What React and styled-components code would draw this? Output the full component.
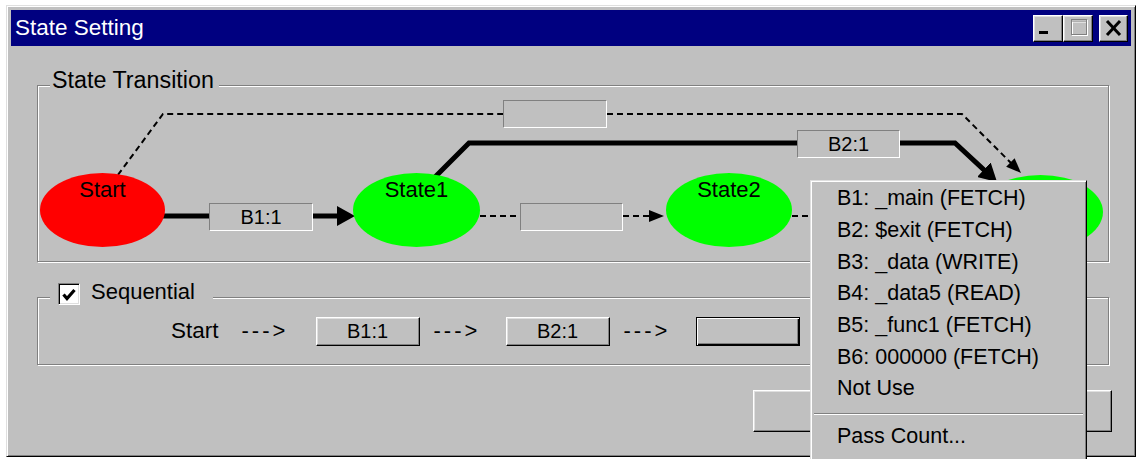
import React from 'react';
import styled, { createGlobalStyle } from 'styled-components';

const FONT = `"Liberation Sans", Arial, sans-serif`;

const GlobalStyle = createGlobalStyle`
  html, body { margin: 0; padding: 0; background: #fff; }
  body { font-family: ${FONT}; overflow: hidden; }
  * { box-sizing: border-box; }
`;

const Screen = styled.div`
  position: relative;
  width: 1138px;
  height: 459px;
  overflow: hidden;
  padding: 5px 0 0 6px;
`;

const Window = styled.div`
  width: 1130px;
  height: 452px;
  background: #c0c0c0;
  border: 1px solid;
  border-color: #dfdfdf #000 #000 #dfdfdf;
  box-shadow: inset 1px 1px 0 #fff, inset -1px -1px 0 #808080;
  padding: 4px;
  display: flex;
  flex-direction: column;
`;

const TitleBar = styled.div`
  height: 36px;
  flex: none;
  background: #000080;
  display: flex;
  align-items: center;
  padding: 0 3px 0 4px;
`;

const TitleText = styled.span`
  color: #fff;
  font-size: 22.5px;
  line-height: 24px;
`;

const TitleButtons = styled.div`
  margin-left: auto;
  display: flex;
  align-items: center;
`;

const raised = `
  background: #c0c0c0;
  border: 1px solid;
  border-color: #fff #000 #000 #fff;
  box-shadow: inset -1px -1px 0 #808080, inset 1px 1px 0 #dfdfdf;
`;

const TitleButton = styled.div`
  ${raised}
  width: ${(p) => p.$w}px;
  height: 27px;
  margin-left: ${(p) => p.$gap || 0}px;
  svg { display: block; }
`;

const Body = styled.div`
  display: flex;
  flex-direction: column;
  padding: 39px 0 0 26px;
`;

const GroupBox = styled.div`
  position: relative;
  width: 1072px;
  height: ${(p) => p.$h}px;
  margin-top: ${(p) => p.$top || 0}px;
  border: 1px solid #808080;
  box-shadow: inset 1px 1px 0 #fff, 1px 1px 0 #fff;
`;

const Legend = styled.div`
  position: absolute;
  top: -18px;
  left: 12px;
  height: 24px;
  display: flex;
  align-items: flex-start;
  gap: 11px;
  padding: ${(p) => p.$pad};
  background: #c0c0c0;
  font-size: ${(p) => p.$size || 22}px;
  line-height: 24px;
  color: #000;
  white-space: nowrap;
  z-index: 2;
`;

const CheckBox = styled.div`
  width: 22px;
  height: 22px;
  margin-top: 3px;
  background: #fff;
  border: 1px solid;
  border-color: #808080 #fff #fff #808080;
  box-shadow: inset 1px 1px 0 #000, inset -1px -1px 0 #dfdfdf;
  svg { display: block; }
`;

const Wires = styled.svg`
  position: absolute;
  left: 0;
  top: 0;
  overflow: visible;
`;

const StateNode = styled.div`
  position: absolute;
  left: ${(p) => p.$x}px;
  top: ${(p) => p.$y}px;
  width: ${(p) => p.$w}px;
  height: 74px;
  border-radius: 50%;
  background: ${(p) => p.$color};
  display: flex;
  justify-content: center;
  padding-top: 5px;
  font-size: 22px;
  line-height: 24px;
  color: #000;
`;

const EdgeLabel = styled.div`
  position: absolute;
  left: ${(p) => p.$x}px;
  top: ${(p) => p.$y}px;
  width: ${(p) => p.$w}px;
  height: 28px;
  background: #c0c0c0;
  border: 1px solid;
  border-color: #808080 #fff #fff #808080;
  display: flex;
  align-items: center;
  justify-content: center;
  font-size: 20px;
  color: #000;
`;

const SeqRow = styled.div`
  height: 100%;
  display: flex;
  align-items: center;
  padding-left: 133px;
`;

const SeqText = styled.span`
  font-size: 22.5px;
  line-height: 24px;
  color: #000;
`;

const SeqArrow = styled.span`
  flex: none;
  width: 46px;
  margin: ${(p) => (p.$first ? '0 28px 0 23px' : '0 26px 0 14px')};
  font-size: 22px;
  line-height: 24px;
  letter-spacing: 3px;
  white-space: nowrap;
  color: #000;
`;

const PushButton = styled.div`
  ${raised}
  flex: none;
  width: ${(p) => p.$w}px;
  height: ${(p) => p.$h}px;
  display: flex;
  align-items: center;
  justify-content: center;
  font-size: 20px;
  color: #000;
  ${(p) => p.$default && `
    border-color: #000;
    box-shadow: inset 1px 1px 0 #fff, inset -1px -1px 0 #000, inset -2px -2px 0 #808080;
  `}
`;

const ButtonRow = styled.div`
  display: flex;
  gap: 13px;
  margin-top: 25px;
  padding-left: 716px;
`;

const Menu = styled.div`
  position: absolute;
  left: 810px;
  top: 180px;
  width: 277px;
  height: 300px;
  background: #c0c0c0;
  border: 1px solid;
  border-color: #dfdfdf #000 #000 #dfdfdf;
  box-shadow: inset 1px 1px 0 #fff, inset -1px -1px 0 #808080;
  padding: 2px;
  z-index: 5;
`;

const MenuItem = styled.div`
  height: 31.67px;
  display: flex;
  align-items: center;
  padding-left: 24px;
  font-size: 21.5px;
  color: #000;
  white-space: nowrap;
`;

const MenuSeparator = styled.div`
  height: 16.3px;
  padding-top: 8px;
  margin: 0 1px;
  &::before {
    content: '';
    display: block;
    height: 1px;
    background: #808080;
    box-shadow: 0 1px 0 #fff;
  }
`;

const nodes = [
  { label: 'Start', x: 2, y: 87, w: 125, color: '#ff0000' },
  { label: 'State1', x: 315, y: 87, w: 127, color: '#00ff00' },
  { label: 'State2', x: 628, y: 87, w: 126, color: '#00ff00' },
  { label: '', x: 940, y: 89, w: 125, color: '#00ff00' },
];

const edgeLabels = [
  { text: 'B1:1', x: 171, y: 117, w: 104 },
  { text: '', x: 482, y: 117, w: 103 },
  { text: '', x: 800, y: 117, w: 103 },
  { text: '', x: 465, y: 14, w: 104 },
  { text: 'B2:1', x: 759, y: 44, w: 103 },
];

const menuItems = [
  'B1: _main (FETCH)',
  'B2: $exit (FETCH)',
  'B3: _data (WRITE)',
  'B4: _data5 (READ)',
  'B5: _func1 (FETCH)',
  'B6: 000000 (FETCH)',
  'Not Use',
];

const thick = { fill: 'none', stroke: '#000', strokeWidth: 5 };
const dashed = { fill: 'none', stroke: '#000', strokeWidth: 2, strokeDasharray: '6 4' };

const Diagram = () => (
  <>
    <Wires width="1070" height="175">
      <defs>
        <marker id="bigHead" markerUnits="userSpaceOnUse" markerWidth="18" markerHeight="20" refX="2" refY="10" orient="auto">
          <path d="M0,0 L18,10 L0,20 Z" fill="#000" />
        </marker>
        <marker id="smallHead" markerUnits="userSpaceOnUse" markerWidth="15" markerHeight="12" refX="2" refY="6" orient="auto">
          <path d="M0,0 L15,6 L0,12 Z" fill="#000" />
        </marker>
      </defs>
      <polyline points="64,130 171,130" {...thick} />
      <polyline points="275,130 301,130" {...thick} markerEnd="url(#bigHead)" />
      <polyline points="380,108 431,57 759,57" {...thick} />
      <polyline points="862,57 917,57 947.3,85.1" {...thick} markerEnd="url(#bigHead)" />
      <polyline points="74,97 125,28 465,28" {...dashed} />
      <polyline points="569,28 924,28 973.8,77.8" {...dashed} markerEnd="url(#smallHead)" />
      <polyline points="442,130 482,130" {...dashed} />
      <polyline points="585,130 613,130" {...dashed} markerEnd="url(#smallHead)" />
      <polyline points="754,130 800,130" {...dashed} />
      <polyline points="903,130 927,130" {...dashed} markerEnd="url(#smallHead)" />
    </Wires>
    {nodes.map((n, i) => (
      <StateNode key={i} $x={n.x} $y={n.y} $w={n.w} $color={n.color}>{n.label}</StateNode>
    ))}
    {edgeLabels.map((e, i) => (
      <EdgeLabel key={i} $x={e.x} $y={e.y} $w={e.w}>{e.text}</EdgeLabel>
    ))}
  </>
);

export default function App() {
  return (
    <>
      <GlobalStyle />
      <Screen>
        <Window>
          <TitleBar>
            <TitleText>State Setting</TitleText>
            <TitleButtons>
              <TitleButton $w={30}>
                <svg width="28" height="25"><rect x="5" y="15" width="9" height="3" fill="#000" /></svg>
              </TitleButton>
              <TitleButton $w={30}>
                <svg width="28" height="25">
                  <g fill="none" stroke="#fff" strokeWidth="1" transform="translate(1,1)">
                    <rect x="7.5" y="3.5" width="15" height="15" />
                    <line x1="7" y1="5" x2="23" y2="5" />
                  </g>
                  <g fill="none" stroke="#808080" strokeWidth="1">
                    <rect x="7.5" y="3.5" width="15" height="15" />
                    <line x1="7" y1="5" x2="23" y2="5" />
                  </g>
                </svg>
              </TitleButton>
              <TitleButton $w={29} $gap={6}>
                <svg width="27" height="25">
                  <g stroke="#000" strokeWidth="3">
                    <line x1="7" y1="5" x2="20" y2="19" />
                    <line x1="20" y1="5" x2="7" y2="19" />
                  </g>
                </svg>
              </TitleButton>
            </TitleButtons>
          </TitleBar>
          <Body>
            <GroupBox $h={177}>
              <Legend $pad="0 5px 0 2px" $size={23.3}>State Transition</Legend>
              <Diagram />
            </GroupBox>
            <GroupBox $h={68} $top={35}>
              <Legend $pad="0 18px 0 8px">
                <CheckBox>
                  <svg width="20" height="20">
                    <polyline points="4.5,10.5 8,14.5 15.5,6" fill="none" stroke="#000" strokeWidth="3.2" />
                  </svg>
                </CheckBox>
                Sequential
              </Legend>
              <SeqRow>
                <SeqText>Start</SeqText>
                <SeqArrow $first>---&gt;</SeqArrow>
                <PushButton $w={104} $h={29}>B1:1</PushButton>
                <SeqArrow>---&gt;</SeqArrow>
                <PushButton $w={104} $h={29}>B2:1</PushButton>
                <SeqArrow>---&gt;</SeqArrow>
                <PushButton $w={104} $h={29} $default />
              </SeqRow>
            </GroupBox>
            <ButtonRow>
              <PushButton $w={173} $h={42}>OK</PushButton>
              <PushButton $w={173} $h={42}>Cancel</PushButton>
            </ButtonRow>
          </Body>
        </Window>
        <Menu>
          {menuItems.map((m) => (
            <MenuItem key={m}>{m}</MenuItem>
          ))}
          <MenuSeparator />
          <MenuItem>Pass Count...</MenuItem>
        </Menu>
      </Screen>
    </>
  );
}
